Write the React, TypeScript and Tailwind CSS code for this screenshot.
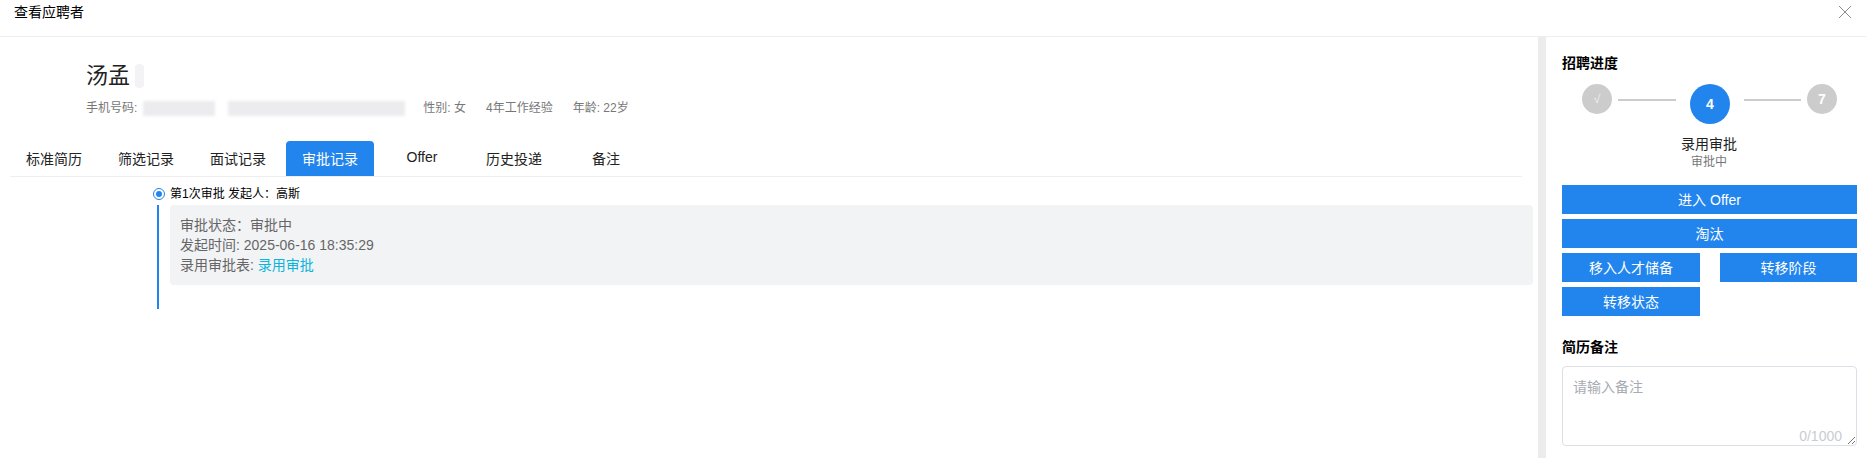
import React from "react";

const font = { fontFamily: '"Liberation Sans","Noto Sans CJK SC",sans-serif' };
const tabs = ["标准简历", "筛选记录", "面试记录", "审批记录", "Offer", "历史投递", "备注"];

function Btn({ children, className = "" }: { children: React.ReactNode; className?: string }) {
  return (
    <button className={`h-[29px] bg-[#2285ed] text-white text-sm flex items-center justify-center ${className}`}>
      {children}
    </button>
  );
}

export default function App() {
  return (
    <div style={font} className="w-[1866px] h-[458px] bg-white overflow-hidden flex flex-col text-[#303133]">
      <header className="h-[37px] shrink-0 border-b border-[#eeeeee] flex items-start justify-between pl-[14px] pr-[14px] pt-[2px]">
        <span className="text-sm leading-[20px] text-black">查看应聘者</span>
        <svg width="14" height="14" viewBox="0 0 14 14" className="mt-[3px]" fill="none" stroke="#8a8a8a" strokeWidth="1">
          <path d="M1 1 L13 13 M13 1 L1 13" />
        </svg>
      </header>

      <div className="flex flex-1 min-h-0">
        <main className="w-[1538px] shrink-0 pr-[16px]">
          <div className="pl-[86px] pt-[25px]">
            <div className="flex items-center h-[28px]">
              <span className="text-[22px] leading-[28px] text-[#222222]">汤孟</span>
              <span className="ml-[5px] w-[9px] h-[24px] rounded bg-[#f3f3f5]" />
            </div>
            <div className="flex items-center h-[18px] mt-[9px] text-xs text-[#777777]">
              <span>手机号码:</span>
              <span className="ml-[6px] w-[72px] h-[15px] bg-[#ececef] blur-[1.5px]" />
              <span className="ml-[13px] w-[177px] h-[15px] bg-[#ececef] blur-[1.5px]" />
              <span className="ml-[18px]">性别: 女</span>
              <span className="ml-[20px]">4年工作经验</span>
              <span className="ml-[20px]">年龄: 22岁</span>
            </div>
          </div>

          <nav className="mt-[24px] ml-[10px] border-b border-[#eeeeee] h-[36px]">
            <div className="flex -ml-[2px]">
              {tabs.map((t) =>
                t === "审批记录" ? (
                  <div key={t} className="w-[92px] px-[2px]">
                    <div className="h-[35px] rounded-t bg-[#2285ed] text-white text-sm flex items-center justify-center">{t}</div>
                  </div>
                ) : (
                  <div key={t} className={`w-[92px] h-[35px] text-sm flex items-center justify-center text-[#222222] ${t === "Offer" ? "pb-[3px]" : ""}`}>
                    {t}
                  </div>
                )
              )}
            </div>
          </nav>

          <section className="pl-[153px] pt-[10px] relative">
            <div className="flex items-center h-[14px] text-xs text-black">
              <span className="w-[12px] h-[12px] rounded-full border border-[#2285ed] flex items-center justify-center mr-[5px]">
                <span className="w-[6px] h-[6px] rounded-full bg-[#2285ed]" />
              </span>
              第1次审批 发起人：高斯
            </div>
            <div className="flex mt-[4px] h-[104px]">
              <div className="w-[2px] h-full bg-[#2285ed] ml-[4px]" />
              <div className="ml-[11px] flex-1 h-[80px] -mr-[11px] bg-[#f2f3f5] rounded pl-[10px] pt-[10px] text-sm leading-[20px] text-[#666666]">
                <div>审批状态：审批中</div>
                <div>发起时间: 2025-06-16 18:35:29</div>
                <div>
                  录用审批表: <span className="text-[#0bb4dc]">录用审批</span>
                </div>
              </div>
            </div>
          </section>
        </main>

        <div className="w-[8px] shrink-0 bg-[#ececec]" />

        <aside className="flex-1 pl-[16px] pr-[9px] pt-[16px]">
          <h3 className="text-sm leading-[20px] font-bold text-black">招聘进度</h3>
          <div className="flex items-start mt-[11px] pl-[20px] pr-[20px] justify-between">
            <div className="w-[30px] h-[30px] rounded-full bg-[#cccccc] text-[#eeeeee] text-xs flex items-center justify-center">√</div>
            <div className="w-[58px] h-[2px] bg-[#cccccc] mt-[15px] ml-[6px]" />
            <div className="w-[40px] h-[40px] rounded-full bg-[#2285ed] text-white text-sm font-bold flex items-center justify-center mx-[14px]">4</div>
            <div className="w-[57px] h-[2px] bg-[#cccccc] mt-[15px] mr-[6px]" />
            <div className="w-[30px] h-[30px] rounded-full bg-[#cccccc] text-white text-sm font-bold flex items-center justify-center">7</div>
          </div>
          <div className="text-center mt-[10px]">
            <div className="text-sm leading-[20px] text-[#222222] -ml-[1px]">录用审批</div>
            <div className="text-xs leading-[16px] text-[#777777] -ml-[1px]">审批中</div>
          </div>

          <div className="mt-[15px] flex flex-col gap-[5px]">
            <Btn>进入 Offer</Btn>
            <Btn>淘汰</Btn>
            <div className="flex justify-between">
              <Btn className="w-[138px]">移入人才储备</Btn>
              <Btn className="w-[137px]">转移阶段</Btn>
            </div>
            <Btn className="w-[138px]">转移状态</Btn>
          </div>

          <h3 className="text-sm leading-[20px] font-bold text-black mt-[21px]">简历备注</h3>
          <div className="relative mt-[9px] h-[80px] border border-[#dcdfe6] rounded text-sm">
            <div className="pl-[10px] pt-[10px] leading-[20px] text-[#a8abb2]">请输入备注</div>
            <span className="absolute right-[14px] bottom-0 text-sm leading-[18px] text-[#c9ccd1]">0/1000</span>
            <svg width="9" height="9" viewBox="0 0 9 9" className="absolute right-0 bottom-0" stroke="#777777" strokeWidth="1">
              <path d="M1 8 L8 1 M5 8 L8 5" />
            </svg>
          </div>
        </aside>
      </div>
    </div>
  );
}
